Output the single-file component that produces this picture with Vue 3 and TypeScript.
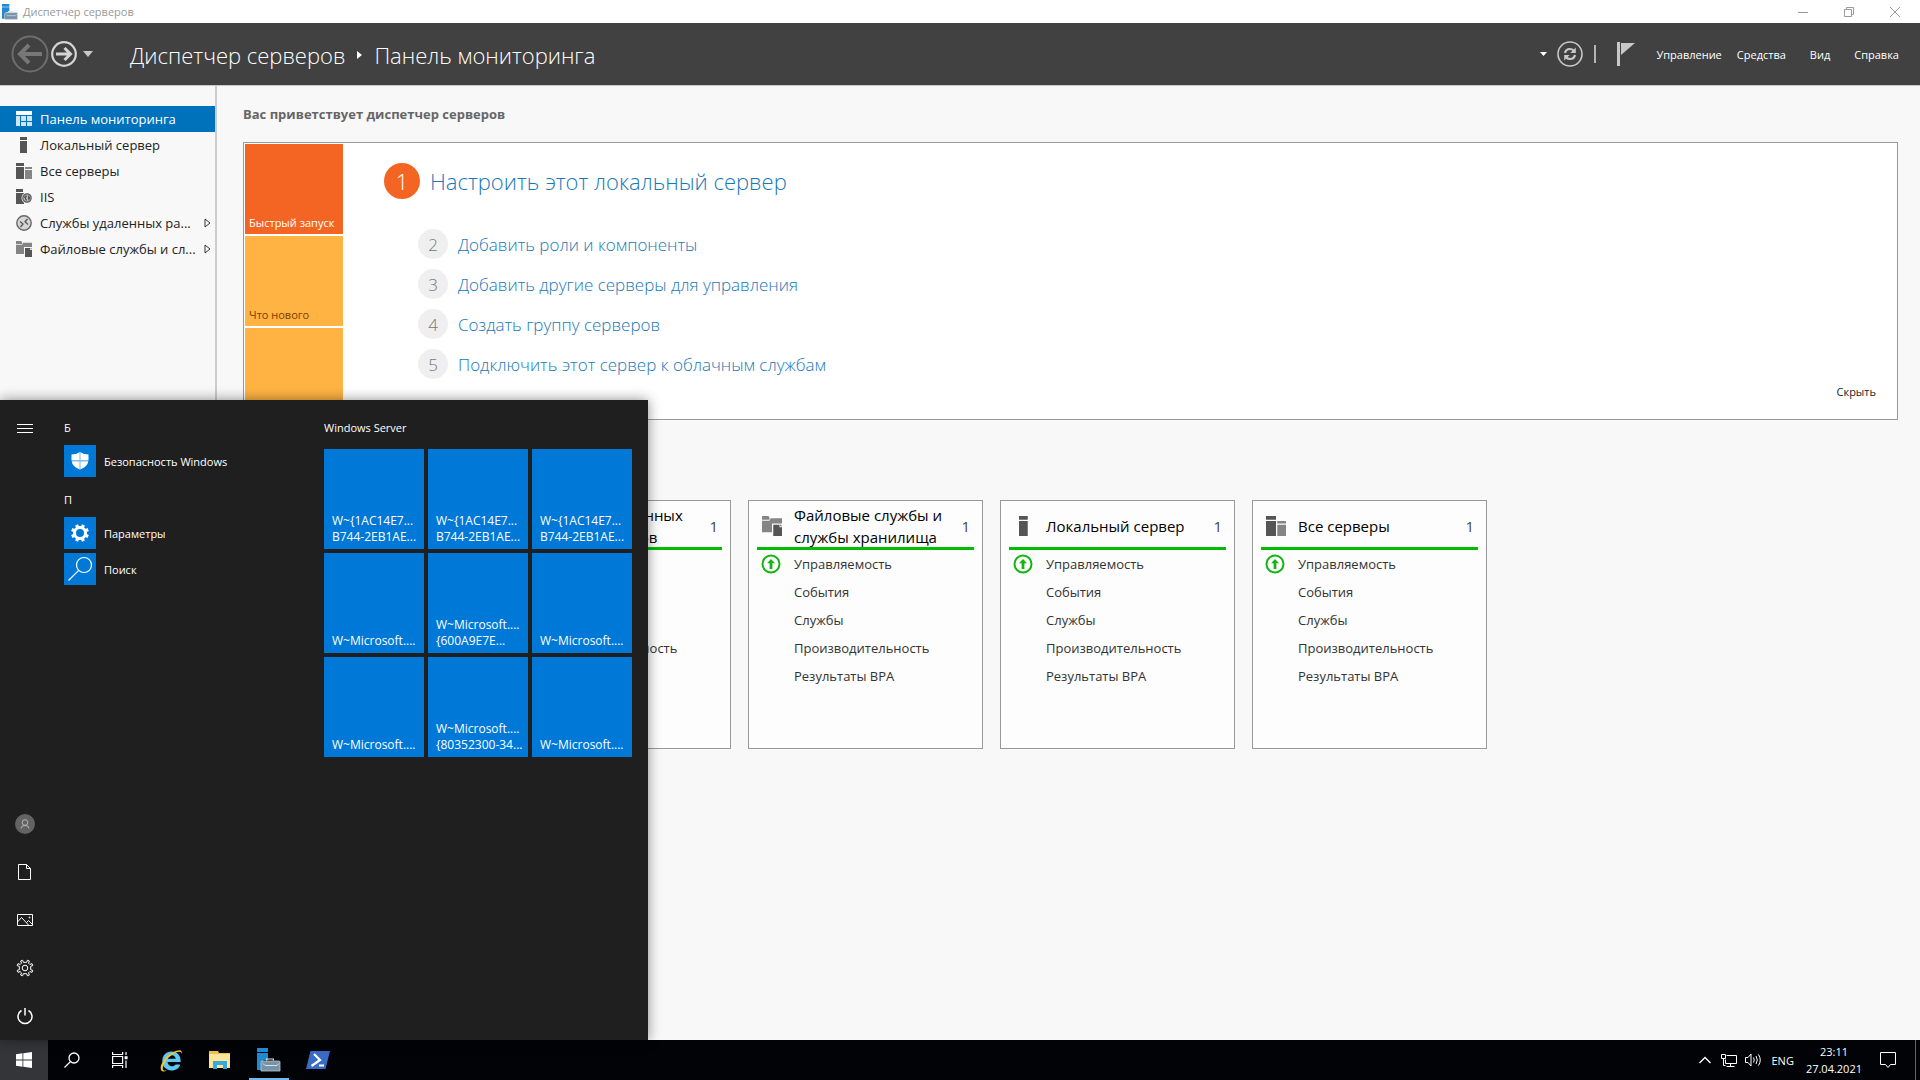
<script setup lang="ts">
import { ref } from 'vue'

interface NavItem { label: string; icon: string; expandable?: boolean }
interface Card { title: string; icon: string; count: number }

const navItems: NavItem[] = [
  { label: 'Панель мониторинга', icon: 'dashboard' },
  { label: 'Локальный сервер', icon: 'server' },
  { label: 'Все серверы', icon: 'servers' },
  { label: 'IIS', icon: 'iis' },
  { label: 'Службы удаленных ра...', icon: 'remote', expandable: true },
  { label: 'Файловые службы и сл...', icon: 'files', expandable: true },
]
const activeNav = ref(0)

const steps: string[] = [
  'Добавить роли и компоненты',
  'Добавить другие серверы для управления',
  'Создать группу серверов',
  'Подключить этот сервер к облачным службам',
]

const cards: Card[] = [
  { title: 'IIS', icon: 'iis', count: 1 },
  { title: 'Службы удаленных рабочих столов', icon: 'remote', count: 1 },
  { title: 'Файловые службы и службы хранилища', icon: 'files', count: 1 },
  { title: 'Локальный сервер', icon: 'server', count: 1 },
  { title: 'Все серверы', icon: 'servers', count: 1 },
]
const checks: string[] = ['Управляемость', 'События', 'Службы', 'Производительность', 'Результаты BPA']

const tiles: string[][] = [
  ['W~{1AC14E7...', 'B744-2EB1AE...'],
  ['W~{1AC14E7...', 'B744-2EB1AE...'],
  ['W~{1AC14E7...', 'B744-2EB1AE...'],
  ['W~Microsoft....'],
  ['W~Microsoft....', '{600A9E7E...'],
  ['W~Microsoft....'],
  ['W~Microsoft....'],
  ['W~Microsoft....', '{80352300-34...'],
  ['W~Microsoft....'],
]
</script>

<template>
  <div class="desktop">
    <svg class="defs" aria-hidden="true">
      <symbol id="i-dashboard" viewBox="0 0 16 16">
        <path fill="#fff" d="M0 0h16v4H0z" />
        <path fill="#cfe4f4" d="M0 5h4v10H0zM5 5h5v5H5zM11 5h5v5h-5zM5 11h5v4H5zM11 11h5v4h-5z" />
      </symbol>
      <symbol id="i-server" viewBox="0 0 16 16">
        <path fill="#555" d="M4 0h7v3H4zM4 4h7v12H4z" />
      </symbol>
      <symbol id="i-servers" viewBox="0 0 16 16">
        <path fill="#555" d="M0 0h8v3H0zM0 4h8v12H0z" />
        <path fill="#858585" d="M9 4h7v2H9zM9 7h7v9H9z" />
      </symbol>
      <symbol id="i-iis" viewBox="0 0 16 16">
        <path fill="#555" d="M0 0h7v3H0zM0 4h8v11H0z" />
        <circle cx="11" cy="9" r="5.5" fill="#f8f8f8" />
        <circle cx="11" cy="9" r="4.2" fill="#bbb" stroke="#5a5a5a" stroke-width="1.2" />
        <path fill="#555" d="M8 8l2-2 1 1-1 2 1 2-1 1zM12 6l2 2v2l-1.500 1.500L12 9.500z" />
      </symbol>
      <symbol id="i-remote" viewBox="0 0 16 16">
        <circle cx="8" cy="8" r="7.200" fill="#d6d6d6" stroke="#666" stroke-width="1.400" />
        <path fill="none" stroke="#555" stroke-width="1.300" d="M4 6.500l3 2.500-2.500 3M11.500 4L9 6.800l3 2.700" />
      </symbol>
      <symbol id="i-files" viewBox="0 0 16 16">
        <path fill="#858585" d="M0 0h5l1 1v2H0zM0 3.800h6l1-2h9V6h-8v7H0z" />
        <path fill="#555" d="M9 7h5v2h2v7H9z" />
        <path fill="#555" d="M14.600 6.600L16 8.200h-1.400z" />
      </symbol>
      <symbol id="i-up" viewBox="0 0 20 20">
        <circle cx="10" cy="10" r="8.500" fill="#fff" stroke="#12b512" stroke-width="2" />
        <path fill="#12b512" d="M10 5l4 4.200h-2.600V15H8.600V9.200H6z" />
      </symbol>
      <symbol id="i-manager" viewBox="0 0 24 24">
        <path fill="#1f8ad2" d="M0 0h11v4H0zM0 5h11v7H7l-3 2v8H0z" />
        <path fill="#d8e4ec" d="M9 12.500V10.500h8v2h-1.200v-1h-5.600v1z" />
        <path fill="#7893a8" stroke="#b9cad6" stroke-width="0.800" d="M5 13h17q1 0 1 1v9H4v-9q0-1 1-1z" />
        <path fill="none" stroke="#d8e4ec" stroke-width="1" d="M6 15.500l2 2h12l2-2" />
      </symbol>
      <symbol id="i-gear" viewBox="0 0 18 18">
        <path d="M6.100 1.200l1.900 1.900h2l1.900-1.900 2.100.9V4.800l1.400 1.400h2.600l.6 1.900-1.900 1.400v1.800l1.300 2-1.200 1.900-2.600-.2-1.400 1.400-.9 2.100H9.800L9 15.200H7.600L6 17l-2-.9.100-2.500-1.300-1.400-2.300-.4-.3-2 1.900-1.300V6.900L.9 4.900l1.300-1.800 2.300.5L5.600 2.500z" transform="translate(0 -.2)" />
      </symbol>
      <symbol id="i-cog" viewBox="0 0 20 20">
        <circle cx="10" cy="10" r="5.500" fill="none" stroke="#fff" stroke-width="3" />
        <path stroke="#fff" stroke-width="3.200" d="M12.300 4.500l1.100-2.700M15.500 7.700l2.700-1.100M15.500 12.300l2.700 1.100M12.300 15.500l1.100 2.700M7.700 15.500l-1.100 2.700M4.500 12.300l-2.700 1.100M4.500 7.700L1.800 6.600M7.700 4.500L6.600 1.800" />
      </symbol>
    </svg>

    <div class="window">
      <header class="titlebar">
        <svg class="title-icon" viewBox="0 0 24 24"><use href="#i-manager" /></svg>
        <span class="title-text">Диспетчер серверов</span>
        <button class="win-btn" aria-label="Свернуть">
          <svg viewBox="0 0 10 10"><path d="M0 5.500h10" /></svg>
        </button>
        <button class="win-btn" aria-label="Восстановить">
          <svg viewBox="0 0 10 10"><path d="M.5 2.500h7v7h-7zM2.500 2.500v-2h7v7h-2" /></svg>
        </button>
        <button class="win-btn" aria-label="Закрыть">
          <svg viewBox="0 0 10 10"><path d="M0 0l10 10M10 0L0 10" /></svg>
        </button>
      </header>

      <div class="toolbar">
        <button class="nav-back" aria-label="Назад">
          <svg viewBox="0 0 38 38">
            <circle cx="19" cy="19" r="17.500" fill="none" stroke="#6d6d6d" stroke-width="2" />
            <path fill="none" stroke="#777" stroke-width="4" d="M31 19H9M18 10l-9 9 9 9" />
          </svg>
        </button>
        <button class="nav-forward" aria-label="Вперед">
          <svg viewBox="0 0 26 26">
            <circle cx="13" cy="13" r="11.800" fill="none" stroke="#d4d4d4" stroke-width="2.200" />
            <path fill="none" stroke="#d4d4d4" stroke-width="3" d="M5 13h14M13.500 7l6 6-6 6" />
          </svg>
        </button>
        <button class="nav-history" aria-label="Журнал">
          <svg viewBox="0 0 10 6"><path fill="#c8c8c8" d="M0 0h10L5 6z" /></svg>
        </button>
        <h1 class="crumbs">
          <span>Диспетчер серверов</span>
          <svg viewBox="0 0 5 8"><path fill="#fff" d="M0 0l5 4-5 4z" /></svg>
          <span>Панель мониторинга</span>
        </h1>
        <button class="drop" aria-label="Обновить по">
          <svg viewBox="0 0 7 4"><path fill="#fff" d="M0 0h7L3.500 4z" /></svg>
        </button>
        <button class="refresh" aria-label="Обновить">
          <svg viewBox="0 0 26 26">
            <circle cx="13" cy="13" r="12" fill="none" stroke="#c8c8c8" stroke-width="1.600" />
            <path fill="none" stroke="#c8c8c8" stroke-width="2.200" d="M8 12q.8-4 5-4 2 0 3.800 1.600M18 14q-.8 4-5 4-2 0-3.800-1.600" />
            <path fill="#c8c8c8" d="M18.800 6.500v5.500h-5.500zM7.200 19.500V14h5.500z" />
          </svg>
        </button>
        <span class="sep"></span>
        <button class="flag" aria-label="Уведомления">
          <svg viewBox="0 0 18 24"><path fill="#c8c8c8" d="M0 0h3v24H0zM4 1h14L4 13z" /></svg>
        </button>
        <nav class="menu">
          <a href="#">Управление</a>
          <a href="#">Средства</a>
          <a href="#" class="menu-view">Вид</a>
          <a href="#">Справка</a>
        </nav>
      </div>

      <div class="body">
        <nav class="sidebar">
          <a
            v-for="(item, i) in navItems"
            :key="item.label"
            href="#"
            class="nav-item"
            :class="{ active: i === activeNav }"
            @click.prevent="activeNav = i"
          >
            <svg class="nav-icon" viewBox="0 0 16 16"><use :href="'#i-' + item.icon" /></svg>
            <span class="nav-label">{{ item.label }}</span>
            <svg v-if="item.expandable" class="nav-arrow" viewBox="0 0 7 10">
              <path d="M1 1l5 4-5 4z" />
            </svg>
          </a>
        </nav>

        <main class="content">
          <h2 class="welcome">Вас приветствует диспетчер серверов</h2>
          <section class="panel">
            <div class="tabs">
              <button class="tab tab-on">Быстрый запуск</button>
              <button class="tab">Что нового</button>
              <button class="tab"></button>
            </div>
            <div class="steps">
              <a href="#" class="step-main"><span class="num">1</span>Настроить этот локальный сервер</a>
              <a v-for="(s, i) in steps" :key="s" href="#" class="step">
                <span class="num">{{ i + 2 }}</span>{{ s }}
              </a>
            </div>
            <button class="hide">Скрыть</button>
          </section>

          <section class="cards">
            <article v-for="c in cards" :key="c.title" class="card">
              <header class="card-head">
                <svg class="card-icon" viewBox="0 0 16 16"><use :href="'#i-' + c.icon" /></svg>
                <h3>{{ c.title }}</h3>
                <span class="count">{{ c.count }}</span>
              </header>
              <ul>
                <li v-for="(k, i) in checks" :key="k">
                  <span class="state"><svg v-if="i === 0" viewBox="0 0 20 20"><use href="#i-up" /></svg></span>
                  <a href="#">{{ k }}</a>
                </li>
              </ul>
            </article>
          </section>
        </main>
      </div>
    </div>

    <aside class="start">
      <div class="rail">
        <button aria-label="Меню"><svg viewBox="0 0 20 20"><path d="M2 6.500h16M2 10.500h16M2 14.500h16" /></svg></button>
        <span class="rail-space"></span>
        <button aria-label="Пользователь">
          <svg viewBox="0 0 20 20">
            <circle cx="10" cy="10" r="10" fill="#636363" stroke="none" />
            <g stroke="#b4b4b4"><circle cx="10" cy="8.500" r="2.800" /><path d="M6 14.500q0-3 4-3t4 3" /></g>
          </svg>
        </button>
        <button aria-label="Документы"><svg viewBox="0 0 20 20"><path d="M3.500 2.500h8l4 4v11h-12zM11.500 2.500v4h4" /></svg></button>
        <button aria-label="Изображения">
          <svg viewBox="0 0 20 20">
            <path d="M2.500 4.500h15v11h-15zM2.500 12l4-4.500 7.500 8M11.500 12.500l2-2 4 4" />
            <circle cx="14.500" cy="7.500" r=".5" />
          </svg>
        </button>
        <button aria-label="Параметры">
          <svg viewBox="0 0 20 20">
            <path d="M8.300 4.300L7.600 2.200l-2 .8.900 2.100-1.400 1.400-2.100-.9-.8 2 2.100.7v3.400l-2.100.7.800 2 2.100-.9 1.400 1.400-.9 2.100 2 .8.700-2.100h3.400l.7 2.100 2-.8-.9-2.100 1.400-1.400 2.100.9.800-2-2.100-.7V8.300l2.100-.7-.8-2-2.100.9-1.400-1.400.9-2.100-2-.8-.7 2.100z" />
            <circle cx="10" cy="10" r="2.800" />
          </svg>
        </button>
        <button aria-label="Выключение">
          <svg viewBox="0 0 20 20"><path d="M6.500 4.500a7 7 0 1 0 7 0M10 2v7.500" stroke-width="1.500" /></svg>
        </button>
      </div>

      <div class="apps">
        <h3 class="letter">Б</h3>
        <a href="#" class="app">
          <span class="app-icon">
            <svg viewBox="0 0 32 32">
              <path fill="#fff" d="M16 7q4 2.500 8.500 2.500v6H7.500v-6Q12 9.500 16 7zM7.700 16.200h16.600Q23.500 22 16 24.500 8.500 22 7.700 16.200z" />
              <path fill="none" stroke="#6db4ee" stroke-width="1" d="M16 7v17.500" />
            </svg>
          </span>Безопасность Windows
        </a>
        <h3 class="letter">П</h3>
        <a href="#" class="app">
          <span class="app-icon">
            <svg viewBox="0 0 32 32"><use href="#i-cog" x="6" y="6" width="20" height="20" /></svg>
          </span>Параметры
        </a>
        <a href="#" class="app">
          <span class="app-icon">
            <svg viewBox="0 0 32 32">
              <g fill="none" stroke="#fff" stroke-width="1.200"><circle cx="20" cy="12" r="7.500" /><path d="M14.700 17.300L4.500 27.500" /></g>
            </svg>
          </span>Поиск
        </a>
      </div>

      <div class="group">
        <h3 class="letter">Windows Server</h3>
        <div class="tiles">
          <a v-for="(t, i) in tiles" :key="i" href="#" class="tile">
            <span v-for="line in t" :key="line">{{ line }}</span>
          </a>
        </div>
      </div>
    </aside>

    <footer class="taskbar">
      <button class="task start-btn" aria-label="Пуск">
        <svg class="s16" viewBox="0 0 16 16">
          <path fill="#fff" d="M0 2.200L6.500 1.300v6.300H0zM7.300 1.200L16 0v7.600H7.300zM0 8.400h6.500v6.300L0 13.800zM7.300 8.400H16V16l-8.700-1.200z" />
        </svg>
      </button>
      <button class="task" aria-label="Поиск">
        <svg class="s16" viewBox="0 0 16 16">
          <g fill="none" stroke="#fff" stroke-width="1.300"><circle cx="10" cy="6" r="5" /><path d="M6.400 9.600L.5 15.500" /></g>
        </svg>
      </button>
      <button class="task" aria-label="Представление задач">
        <svg class="s16" viewBox="0 0 16 16">
          <g fill="none" stroke="#fff" stroke-width="1.200">
            <path d="M.6 4.500h10v7h-10zM.6 0v2.500h10V0M.6 16v-2.500h10V16M14 0v3M14 8.500V16" />
            <path fill="#fff" d="M13.200 4.800h1.800v1.800h-1.800z" />
          </g>
        </svg>
      </button>
      <div class="pins">
        <button class="task" aria-label="Internet Explorer">
          <svg class="s24" viewBox="0 0 24 24">
            <path fill="#5cc8f5" fill-rule="evenodd" d="M12.500 3.500c5.600 0 9.500 4 9.200 10.500H8.500c.3 2.700 2 4.200 4.400 4.200 1.700 0 2.900-.6 3.600-1.800h4.800c-1.200 3.800-4.400 6-8.600 6-5.600 0-9.400-3.900-9.400-9.400s3.800-9.500 9.200-9.500zM8.600 10.800h8.100c-.3-2.300-1.800-3.500-4-3.500s-3.700 1.300-4.100 3.500z" />
            <path fill="#f7c431" d="M22.600 6.500c1-3-.4-4.900-3.600-4C11.500 3.500 1.500 13 1.700 20.500c.2 3.500 3.300 3.500 6.300 1.700-2.700.8-4.400.2-4.200-2.200C4.500 13.500 13 5 19.500 3.800c2.400-.4 3.300.7 3.100 2.700z" />
          </svg>
        </button>
        <button class="task" aria-label="Проводник">
          <svg class="s24" viewBox="0 0 24 24">
            <path fill="#f2c14e" d="M1 3h9l1 2h11v4H1z" />
            <path fill="#fde69b" d="M1 6h21v14H1z" />
            <path fill="#33a9dc" d="M5 21v-8h14v8h-4v-4H9v4z" />
          </svg>
        </button>
        <button class="task running" aria-label="Диспетчер серверов">
          <svg class="s24" viewBox="0 0 24 24"><use href="#i-manager" /></svg>
        </button>
        <button class="task" aria-label="PowerShell">
          <svg class="s24" viewBox="0 0 24 24">
            <path fill="#3a6bc4" d="M4.500 3H24l-4.500 18H0z" />
            <path fill="none" stroke="#fff" stroke-width="2.200" d="M8 6l6 6-8.500 6M13 17.500h5" />
          </svg>
        </button>
      </div>
      <div class="tray">
        <button class="tray-btn" aria-label="Скрытые значки">
          <svg class="s16" viewBox="0 0 16 16"><path d="M2.500 11L8 5.500l5.500 5.500" stroke-width="1.400" /></svg>
        </button>
        <button class="tray-btn" aria-label="Сеть">
          <svg class="s16" viewBox="0 0 16 16"><path d="M5.500 3.500h10v8h-11v-4M.5 2.500h4v4h-4zM2.500 6.500v7h2M9.500 11.500v3M5.500 14.500h8" /></svg>
        </button>
        <button class="tray-btn" aria-label="Громкость">
          <svg class="s16" viewBox="0 0 16 16"><path d="M.5 5.500H3l3-3.500v12l-3-3.500H.5zM8.500 5.500q1.500 2.500 0 5M11 4q2.600 4 0 8M13.500 2.500q3.500 5.500 0 11" /></svg>
        </button>
        <button class="lang">ENG</button>
        <button class="clock"><span>23:11</span><span>27.04.2021</span></button>
        <button class="notify" aria-label="Уведомления">
          <svg viewBox="0 0 18 18"><path d="M1.500 1.500h15v12h-5l-2.500 3-2.500-3h-5z" /></svg>
        </button>
        <button class="peek" aria-label="Свернуть все окна"></button>
      </div>
    </footer>
  </div>
</template>

<style>
html, body { margin: 0; background: #f8f8f8; }
</style>

<style scoped>
.desktop {
  position: relative;
  display: flex;
  flex-direction: column;
  min-height: 100vh;
  overflow: hidden;
  font-family: "Open Sans", "Noto Sans", sans-serif;
  font-size: 11px;
  color: #222;
}
.defs { position: absolute; width: 0; height: 0; }
h1, h2, h3, ul { margin: 0; padding: 0; font-weight: 400; list-style: none; }
a { color: inherit; text-decoration: none; }
button { border: 0; padding: 0; background: none; font: inherit; color: inherit; }
svg { display: block; flex: none; }

.window { flex: 1; display: flex; flex-direction: column; }

.titlebar { display: flex; align-items: center; height: 23px; padding-right: 2px; background: #fff; color: #999; }
.title-icon { width: 16px; height: 16px; margin-left: 2px; }
.title-text { flex: 1; margin-left: 5px; line-height: 20px; }
.win-btn { display: flex; align-items: center; justify-content: center; width: 46px; height: 20px; }
.win-btn svg { width: 10px; height: 10px; fill: none; stroke: #999; }

.toolbar {
  display: flex;
  align-items: center;
  height: 62px;
  padding: 0 21px 0 11px;
  background: #414141;
  border-bottom: 1px solid #c8c8c8;
  color: #fff;
}
.nav-back svg { width: 38px; height: 38px; }
.nav-forward { margin-left: 2px; }
.nav-forward svg { width: 26px; height: 26px; }
.nav-history { margin-left: 6px; }
.nav-history svg { width: 10px; height: 6px; }
.crumbs {
  flex: 1;
  display: flex;
  align-items: center;
  gap: 12px;
  margin-left: 37px;
  padding-top: 2px;
  font-size: 22px;
  font-weight: 300;
  line-height: 32px;
}
.crumbs svg { width: 5px; height: 8px; }
.drop svg { width: 7px; height: 4px; }
.refresh { margin-left: 10px; }
.refresh svg { width: 26px; height: 26px; }
.sep { width: 2px; height: 18px; margin-left: 11px; background: #b4b4b4; }
.flag { margin-left: 21px; }
.flag svg { width: 18px; height: 24px; }
.menu { display: flex; align-items: center; gap: 15px; margin-left: 21px; padding-top: 2px; line-height: 20px; }
.menu-view { margin: 0 9px; }

.body { flex: 1; display: flex; background: #f8f8f8; }
.sidebar { width: 215px; flex: none; padding-top: 20px; border-right: 2px solid #ccc; }
.nav-item { display: flex; align-items: center; height: 26px; padding: 0 4px 0 16px; font-size: 13px; }
.nav-item.active { background: #0072bc; color: #fff; }
.nav-icon { width: 16px; height: 16px; margin-right: 8px; }
.nav-label { flex: 1; white-space: nowrap; }
.nav-arrow { width: 7px; height: 10px; fill: none; stroke: #333; }

.content { flex: 1; min-width: 0; padding: 16px 22px 0 26px; }
.welcome { font-size: 13px; font-weight: 700; line-height: 24px; color: #666; }
.panel { display: flex; margin-top: 16px; border: 1px solid #999; background: #fff; padding: 1px; }
.tabs { display: flex; flex-direction: column; gap: 2px; width: 98px; }
.tab {
  display: flex;
  align-items: flex-end;
  height: 90px;
  padding: 0 0 2px 4px;
  background: #ffb343;
  color: #7d3c00;
  line-height: 18px;
  white-space: nowrap;
}
.tab-on { background: #f46523; color: #fff; }
.steps { flex: 1; display: flex; flex-direction: column; align-items: flex-start; padding: 19px 0 0 41px; color: #1978b9; font-weight: 300; }
.step-main { display: flex; align-items: center; gap: 10px; height: 36px; margin-bottom: 25px; font-size: 22px; }
.step { display: flex; align-items: center; gap: 10px; height: 40px; margin-left: 34px; font-size: 17px; }
.num { display: flex; align-items: center; justify-content: center; border-radius: 50%; }
.step-main .num { width: 36px; height: 36px; background: #f46523; color: #fff; }
.step .num { width: 30px; height: 30px; background: #efefef; color: #777; }
.hide { align-self: flex-end; margin: 0 20px 16px 0; line-height: 20px; }

.cards { display: flex; gap: 17px; margin-top: 80px; padding-left: 1px; }
.card { box-sizing: border-box; width: 235px; height: 249px; flex: none; padding: 0 8px; border: 1px solid #999; background: #fdfdfd; }
.card-head {
  display: flex;
  align-items: center;
  height: 46px;
  padding: 4px 4px 0 5px;
  box-sizing: border-box;
}
.card-icon { width: 20px; height: 20px; }
.card-head h3 { flex: 1; margin-left: 12px; font-size: 15px; line-height: 22px; color: #000; }
.count { font-size: 15px; color: #444; }
.card ul { border-top: 3px solid #00bc00; }
.card li { display: flex; align-items: center; height: 28px; font-size: 13px; color: #333; }
.state { width: 20px; margin: 0 13px 0 4px; }
.state svg { width: 20px; height: 20px; }

.start {
  position: absolute;
  left: 0;
  bottom: 40px;
  display: flex;
  box-sizing: border-box;
  width: 648px;
  height: 640px;
  background: #1f1f1f;
  color: #fff;
  box-shadow: 0 0 12px rgba(0, 0, 0, 0.45);
}
.rail { display: flex; flex-direction: column; width: 50px; padding-top: 4px; }
.rail-space { flex: 1; }
.rail button { display: flex; align-items: center; justify-content: center; height: 48px; }
.rail svg { width: 20px; height: 20px; fill: none; stroke: #fff; }
.letter { font-size: 11px; line-height: 20px; }
.apps { width: 260px; padding: 18px 0 0 14px; display: flex; flex-direction: column; gap: 4px; box-sizing: border-box; }
.apps .letter { margin-bottom: 3px; }
.app + .letter { margin-top: 9px; }
.app { display: flex; align-items: center; gap: 8px; height: 32px; }
.app-icon, .app-icon svg { width: 32px; height: 32px; background: #0078d7; }
.group { padding: 18px 0 0 14px; }
.tiles { display: grid; grid-template-columns: repeat(3, 100px); gap: 4px; margin-top: 11px; }
.tile {
  display: flex;
  flex-direction: column;
  justify-content: flex-end;
  height: 100px;
  box-sizing: border-box;
  padding: 0 8px 4px;
  background: #0078d7;
  font-size: 12px;
  line-height: 16px;
  white-space: nowrap;
}

.taskbar { display: flex; height: 40px; background: #010306; color: #fff; }
.task { display: flex; align-items: center; justify-content: center; width: 48px; height: 40px; }
.start-btn { background: #343538; }
.s16 { width: 16px; height: 16px; }
.s24 { width: 24px; height: 24px; }
.pins { display: flex; gap: 1px; margin-left: 3px; }
.running { position: relative; }
.running::after { content: ""; position: absolute; left: 4px; right: 4px; bottom: 0; height: 2px; background: #76b9ed; }
.tray { display: flex; align-items: center; margin-left: auto; }
.tray svg { fill: none; stroke: #fff; }
.tray-btn { width: 24px; display: flex; justify-content: center; }
.lang { margin: 0 12px 0 6px; }
.clock { display: flex; flex-direction: column; align-items: center; line-height: 17px; }
.notify { margin: 0 18px 0 17px; }
.notify svg { width: 18px; height: 18px; }
.peek { width: 5px; height: 40px; border-left: 1px solid #666; }
</style>
